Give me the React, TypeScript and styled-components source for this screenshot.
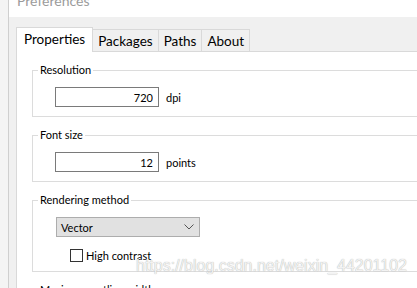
import React from "react"
import styled, { createGlobalStyle } from "styled-components"

const GlobalStyle = createGlobalStyle`
  html, body {
    margin: 0;
    padding: 0;
    background: #f3f3f3;
  }
`

const colors = {
  face: "#f0f0f0",
  tabBorder: "#d9d9d9",
  groupBorder: "#dcdcdc",
  inputBorder: "#7a7a7a",
  text: "#000000"
}

const Screen = styled.div`
  position: relative;
  display: flex;
  width: 417px;
  height: 288px;
  overflow: hidden;
  background: ${colors.face};
  font-family: Lato, "Liberation Sans", sans-serif;
  color: ${colors.text};
`

const Desktop = styled.div`
  width: 8px;
  flex: none;
  background: #f4f4f4;
  border-right: 1px solid #cfcfcf;
`

const Window = styled.div`
  flex: 1;
  min-width: 0;
  display: flex;
  flex-direction: column;
`

const TitleBar = styled.div`
  height: 17px;
  flex: none;
  background: white;
  overflow: hidden;
`

const Title = styled.div`
  margin-top: -9px;
  padding-left: 8px;
  font-size: 14px;
  line-height: 20px;
  color: #9b9b9b;
`

const Body = styled.div`
  flex: 1;
  min-height: 0;
  display: flex;
  flex-direction: column;
  padding: 10px 0 0 7px;
`

const TabStrip = styled.div`
  display: flex;
  align-items: flex-end;
  height: 24px;
  flex: none;
`

const Tab = styled.div<{ selected?: boolean }>`
  position: relative;
  box-sizing: border-box;
  display: flex;
  align-items: center;
  border: 1px solid ${colors.tabBorder};
  border-bottom: none;
  font-size: 13.5px;
  ${(p) =>
    p.selected
      ? `
    z-index: 1;
    height: 25px;
    margin-bottom: -1px;
    padding: 0 7px 2px;
    background: white;
  `
      : `
    height: 22px;
    margin-left: -1px;
    padding: 0 5px 0;
    background: ${colors.face};
  `}
`

const Panel = styled.div`
  flex: 1;
  min-height: 0;
  overflow: hidden;
  background: white;
  border-top: 1px solid ${colors.tabBorder};
  border-left: 1px solid ${colors.tabBorder};
  padding: 11px 0 0 15px;
`

const Group = styled.fieldset`
  margin: 0 -20px 11px 0;
  padding: 0;
  min-width: 0;
  border: 1px solid ${colors.groupBorder};
`

const Caption = styled.legend`
  margin-left: 5px;
  padding: 0 2px;
  font-size: 11px;
  line-height: 14px;
`

const GroupBody = styled.div<{ indent?: number }>`
  padding: 10px 0 9px ${(p) => p.indent ?? 22}px;
`

const FieldRow = styled.div`
  display: flex;
  align-items: center;
  gap: 7px;
  font-size: 11px;
`

const NumberBox = styled.input`
  box-sizing: border-box;
  width: 104px;
  height: 20px;
  margin: 0;
  padding: 0 5px;
  border: 1px solid ${colors.inputBorder};
  border-radius: 0;
  outline: none;
  text-align: right;
  font-family: inherit;
  font-size: 11px;
  color: ${colors.text};
  background: white;
`

const Dropdown = styled.div`
  box-sizing: border-box;
  display: flex;
  align-items: center;
  justify-content: space-between;
  width: 144px;
  height: 20px;
  padding: 0 5px 0 4px;
  background: #e1e1e1;
  border: 1px solid #adadad;
  font-size: 11px;
`

const CheckRow = styled.label`
  display: flex;
  align-items: center;
  gap: 3px;
  height: 13px;
  margin: 12px 0 0 14px;
  font-size: 11px;
`

const CheckBox = styled.span`
  box-sizing: border-box;
  width: 13px;
  height: 13px;
  border: 1px solid #333;
  background: white;
`

const Watermark = styled.div`
  position: absolute;
  left: 136px;
  top: 257px;
  font-family: "Liberation Sans", Arial, sans-serif;
  font-size: 16px;
  line-height: 18px;
  color: #f2f2f2;
  text-shadow: 0 0 1px #a0a0a0;
  white-space: nowrap;
  pointer-events: none;
`

const Chevron = () => (
  <svg width="10" height="6" viewBox="0 0 10 6">
    <path d="M0.5 0.5 L5 5 L9.5 0.5" fill="none" stroke="#555" strokeWidth="1" />
  </svg>
)

const tabs = ["Properties", "Packages", "Paths", "About"]

const NumberField = (props: { value: string; unit: string }) => (
  <FieldRow>
    <NumberBox readOnly value={props.value} />
    <span>{props.unit}</span>
  </FieldRow>
)

export default function App() {
  return (
    <Screen>
      <GlobalStyle />
      <Desktop />
      <Window>
        <TitleBar>
          <Title>Preferences</Title>
        </TitleBar>
        <Body>
          <TabStrip>
            {tabs.map((t, i) => (
              <Tab key={t} selected={i === 0}>
                {t}
              </Tab>
            ))}
          </TabStrip>
          <Panel>
            <Group>
              <Caption>Resolution</Caption>
              <GroupBody>
                <NumberField value="720" unit="dpi" />
              </GroupBody>
            </Group>
            <Group>
              <Caption>Font size</Caption>
              <GroupBody>
                <NumberField value="12" unit="points" />
              </GroupBody>
            </Group>
            <Group>
              <Caption>Rendering method</Caption>
              <GroupBody indent={23}>
                <Dropdown>
                  <span>Vector</span>
                  <Chevron />
                </Dropdown>
                <CheckRow>
                  <CheckBox />
                  <span>High contrast</span>
                </CheckRow>
              </GroupBody>
            </Group>
            <Group>
              <Caption>Maximum outline width</Caption>
              <GroupBody />
            </Group>
          </Panel>
        </Body>
      </Window>
      <Watermark>https://blog.csdn.net/weixin_44201102</Watermark>
    </Screen>
  )
}
